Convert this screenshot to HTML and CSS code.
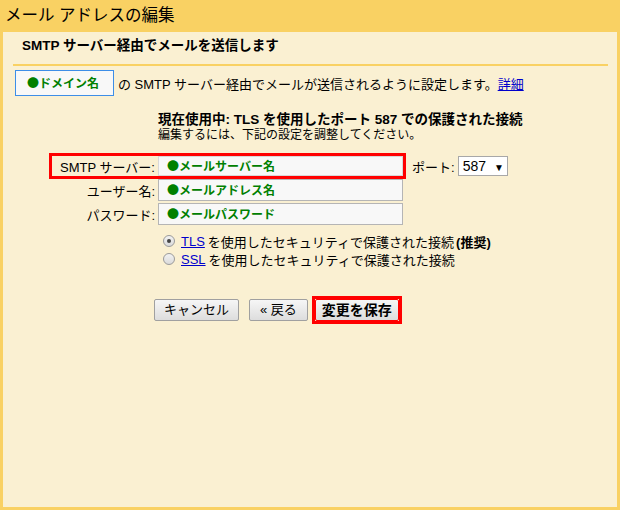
FILE: index.html
```html
<!DOCTYPE html>
<html>
<head>
    <meta charset="UTF-8">
    <title>メール アドレスの編集</title>
    <link rel="stylesheet" href="styles.css">
</head>
<body>
<div class="ma-head">メール アドレスの編集</div>
<div class="ma-panel">
    <div class="ma-sub">SMTP サーバー経由でメールを送信します</div>
    <div class="ma-domain">
        <span class="ma-dbox"><b class="ph">●ドメイン名</b></span>
        <span class="ma-dtext">の SMTP サーバー経由でメールが送信されるように設定します。<a href="#">詳細</a></span>
    </div>
    <div class="ma-status">
        <div class="st-main">現在使用中: TLS を使用したポート 587 での保護された接続</div>
        <div class="st-note">編集するには、下記の設定を調整してください。</div>
    </div>
    <div class="ma-form">
        <div class="row">
            <span class="hl">
                <label class="lbl">SMTP サーバー:</label>
                <span class="fld"><b class="ph">●メールサーバー名</b></span>
            </span>
            <label class="port">ポート:</label>
            <span class="sel">587 <i>▼</i></span>
        </div>
        <div class="row">
            <label class="lbl">ユーザー名:</label>
            <span class="fld"><b class="ph">●メールアドレス名</b></span>
        </div>
        <div class="row">
            <label class="lbl">パスワード:</label>
            <span class="fld"><b class="ph">●メールパスワード</b></span>
        </div>
    </div>
    <div class="ma-radio">
        <div class="opt"><span class="rd on"></span><a href="#">TLS</a> を使用したセキュリティで保護された接続<b>(推奨)</b></div>
        <div class="opt"><span class="rd"></span><a href="#">SSL</a> を使用したセキュリティで保護された接続</div>
    </div>
    <div class="ma-btns">
        <span class="btn">キャンセル</span>
        <span class="btn back">« 戻る</span>
        <span class="btn-hl"><span class="btn save">変更を保存</span></span>
    </div>
</div>
</body>
</html>
```

FILE: styles.css
```css
body,div{
    margin: 0;
    padding: 0;
}
body{
    background: #F9D163;
    font-family: "Liberation Sans", "Noto Sans CJK JP", sans-serif;
    font-size: 13px;
    color: #000;
    height: 510px;
    display: flex;
    flex-direction: column;
}
a{
    color: #0000CC;
}

.ma-head{
    height: 32px;
    line-height: 30px;
    padding-left: 5px;
    font-size: 16.5px;
}
.ma-panel{
    flex: 1;
    margin: 0 3px 3px;
    background: #FAF0D2;
}
.ma-sub{
    margin: 0 9px 0 10px;
    padding: 6px 0 10px 9px;
    font-weight: bold;
    font-size: 13.5px;
    line-height: 16px;
    border-bottom: 2px solid #F9D163;
}

.ma-domain{
    display: flex;
    align-items: center;
    margin: 4px 0 0 12px;
}
.ma-dbox{
    box-sizing: border-box;
    width: 99px;
    height: 26px;
    border: 1px solid #3D8EE8;
    background: #F8F8F8;
    padding-left: 11px;
    line-height: 24px;
}
.ph{
    color: #008000;
    font-size: 12px;
    font-family: "Noto Sans CJK JP", sans-serif;
}
.ma-dtext{
    margin-left: 4px;
}

.ma-status{
    margin: 16px 0 0 155px;
}
.st-main{
    font-weight: bold;
    font-size: 13.5px;
    line-height: 16px;
}
.st-note{
    font-size: 12px;
    line-height: 14px;
}

.ma-form{
    margin: 12px 0 0 49px;
}
.row{
    display: flex;
    align-items: center;
    height: 24px;
}
.hl{
    display: flex;
    align-items: center;
    border: 3px solid #F00;
    margin: 0 -3px 0 -3px;
    height: 20px;
}
.hl .lbl{
    width: 106px;
}
.lbl{
    width: 106px;
    text-align: right;
    padding-right: 3px;
    box-sizing: border-box;
}
.fld{
    box-sizing: border-box;
    width: 245px;
    height: 22px;
    line-height: 20px;
    border: 1px solid #B5B5B5;
    background: #F8F8F8;
    padding-left: 8px;
}
.hl .fld{
    border-color: #D8D8D8;
    height: 20px;
    line-height: 18px;
}
.port{
    margin-left: 9px;
}
.sel{
    box-sizing: border-box;
    width: 50px;
    height: 20px;
    line-height: 18px;
    margin-left: 3px;
    border: 1px solid #A8A8A8;
    background: #FFF;
    padding-left: 4px;
    font-size: 14px;
}
.sel i{
    font-style: normal;
    font-size: 10px;
    margin-left: 4px;
}

.ma-radio{
    margin: 6px 0 0 160px;
}
.opt{
    display: flex;
    align-items: center;
    height: 18px;
}
.rd{
    box-sizing: border-box;
    width: 12px;
    height: 12px;
    border-radius: 50%;
    border: 1px solid #9A9A9A;
    background: linear-gradient(#F2F2F2, #DADADA);
    margin-right: 6px;
    position: relative;
}
.rd.on::after{
    content: "";
    position: absolute;
    left: 3px;
    top: 3px;
    width: 4px;
    height: 4px;
    border-radius: 50%;
    background: #444;
}
.opt a{
    margin-right: 3px;
}
.opt b{
    margin-left: 2px;
}

.ma-btns{
    display: flex;
    align-items: center;
    margin: 28px 0 0 151px;
}
.btn{
    box-sizing: border-box;
    height: 22px;
    line-height: 20px;
    padding: 0 9px;
    border: 1px solid #A0A0A0;
    border-radius: 2px;
    background: linear-gradient(#F6F6F6, #DDDDDD);
}
.back{
    margin-left: 10px;
    padding: 0 10px;
}
.btn-hl{
    border: 3px solid #F00;
    margin-left: 4px;
}
.btn.save{
    display: block;
    font-weight: bold;
    font-size: 14px;
    border-color: #F00;
    padding: 0 6px;
}
```
